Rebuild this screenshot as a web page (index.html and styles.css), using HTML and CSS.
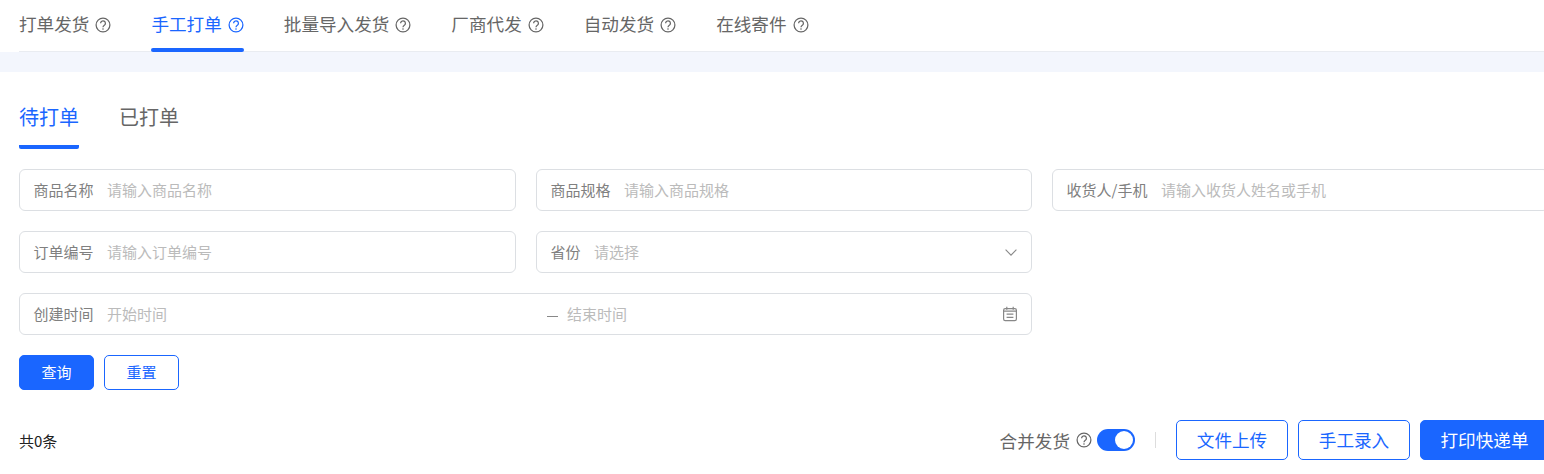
FILE: index.html
```html
<!DOCTYPE html>
<html lang="zh-CN">
<head>
<meta charset="utf-8">
<title>手工打单</title>
<link rel="stylesheet" href="styles.css">
</head>
<body>
<svg class="defs" width="0" height="0" aria-hidden="true">
  <symbol id="help" viewBox="0 0 16 16">
    <circle cx="8" cy="8" r="6.9" fill="none" stroke="currentColor" stroke-width="1.25"/>
    <path d="M5.6 6.3a2.4 2.4 0 1 1 3.7 2c-.9.6-1.3 1-1.3 2" fill="none" stroke="currentColor" stroke-width="1.25"/>
    <circle cx="8" cy="12" r=".8" fill="currentColor"/>
  </symbol>
</svg>
<header class="top-tabs">
  <nav class="top-tabs-inner">
    <a class="top-tab">打单发货<svg class="help"><use href="#help"/></svg></a>
    <a class="top-tab active">手工打单<svg class="help"><use href="#help"/></svg></a>
    <a class="top-tab">批量导入发货<svg class="help"><use href="#help"/></svg></a>
    <a class="top-tab">厂商代发<svg class="help"><use href="#help"/></svg></a>
    <a class="top-tab">自动发货<svg class="help"><use href="#help"/></svg></a>
    <a class="top-tab">在线寄件<svg class="help"><use href="#help"/></svg></a>
  </nav>
</header>
<div class="band"></div>
<main class="content">
  <div class="sub-tabs">
    <a class="sub-tab active">待打单</a>
    <a class="sub-tab">已打单</a>
  </div>
  <form class="filters">
    <div class="field"><span class="label">商品名称</span><span class="ph">请输入商品名称</span></div>
    <div class="field"><span class="label">商品规格</span><span class="ph">请输入商品规格</span></div>
    <div class="field"><span class="label">收货人/手机</span><span class="ph">请输入收货人姓名或手机</span></div>
    <div class="field"><span class="label">订单编号</span><span class="ph">请输入订单编号</span></div>
    <div class="field"><span class="label">省份</span><span class="ph grow">请选择</span>
      <svg class="chev" viewBox="0 0 12 7"><path d="M.6.7L6 6.1 11.4.7" fill="none" stroke="currentColor" stroke-width="1.1"/></svg>
    </div>
    <div class="field-empty"></div>
    <div class="field wide"><span class="label">创建时间</span>
      <span class="ph range-start">开始时间</span><span class="dash"></span><span class="ph grow">结束时间</span>
      <svg class="cal" viewBox="0 0 16 16" fill="none" stroke="currentColor" stroke-width="1.2">
        <rect x="1.6" y="2.6" width="12.8" height="12" rx="1.6"/>
        <path d="M4.8 .8v3M11.2 .8v3M1.6 5.2h12.8M4.6 8.2h6.8M4.6 11.4h6.8"/>
      </svg>
    </div>
  </form>
  <div class="actions">
    <button class="btn primary" type="button">查询</button>
    <button class="btn outline" type="button">重置</button>
  </div>
  <div class="toolbar">
    <span class="total">共0条</span>
    <div class="tools">
      <span class="merge">合并发货<svg class="help"><use href="#help"/></svg></span>
      <span class="switch"><span class="knob"></span></span>
      <span class="sep"></span>
      <button class="btn big outline" type="button">文件上传</button>
      <button class="btn big outline" type="button">手工录入</button>
      <button class="btn big primary last" type="button">打印快递单</button>
    </div>
  </div>
</main>
</body>
</html>
```

FILE: styles.css
```css
* { box-sizing: border-box; }
html, body { margin: 0; height: 474px; overflow: hidden; background: #fff; }
body { font-family: "Noto Sans CJK SC", "Liberation Sans", sans-serif; width: 1544px; color: #666; }
.defs { position: absolute; }
.top-tabs { height: 52px; padding-left: 19px; }
.top-tabs-inner { display: flex; gap: 40px; height: 52px; border-bottom: 1px solid #e9ecf1; }
.top-tab { position: relative; display: flex; align-items: flex-start; height: 51px; padding-top: 11px; font-size: 17.6px; line-height: 26px; color: #666; }
.top-tab .help { margin: 6px 0 0 6px; }
.top-tab.active { color: #1a66ff; }
.top-tab.active::after { content: ""; position: absolute; left: 0; right: 0; bottom: -1px; height: 4px; border-radius: 2px; background: #1a66ff; }
.help { width: 16px; height: 16px; flex: none; }
.band { height: 20px; background: #f3f6fd; }
.content { width: 1530px; margin-left: 19px; }
.sub-tabs { display: flex; gap: 40px; height: 77px; }
.sub-tab { height: 77px; padding-top: 29px; font-size: 20px; line-height: 32px; color: #666; }
.sub-tab.active { color: #1a66ff; border-bottom: 4px solid #1a66ff; border-radius: 2px; }
.filters { display: grid; grid-template-columns: 497px 496px 497px; gap: 20px; margin-top: 20px; }
.field { display: flex; align-items: center; height: 42px; padding: 0 14px; border: 1px solid #dcdfe3; border-radius: 6px; font-size: 15px; line-height: 38px; }
.field.wide { grid-column: span 2; }
.label { color: #808080; margin: 0 13.5px 0 -.5px; white-space: nowrap; }
.ph { color: #bbb; white-space: nowrap; }
.grow { flex: 1; }
.range-start { width: 440px; }
.dash { width: 11px; height: 1px; background: #888; margin: 4px 9px 0 0; }
.chev { width: 12px; height: 7px; color: #888; }
.cal { width: 16px; height: 16px; color: #888; margin-right: -1px; }
.actions { display: flex; gap: 10px; margin-top: 20px; }
.btn { font: inherit; font-size: 15px; line-height: 28px; width: 75px; height: 35px; padding: 0 0 2px; border-radius: 5px; border: 1px solid #1a66ff; cursor: pointer; }
.primary { background: #1a66ff; color: #fff; }
.outline { background: #fff; color: #1a66ff; }
.btn.big { width: 112px; height: 40px; font-size: 17.6px; padding: 0; }
.btn.last { width: 129px; }
.toolbar { display: flex; justify-content: space-between; align-items: center; height: 40px; margin-top: 30px; }
.total { font-size: 15px; color: #222; }
.tools { display: flex; align-items: center; gap: 10px; }
.merge { display: flex; align-items: center; gap: 6px; font-size: 17.6px; color: #666; margin-right: -5px; }
.switch { display: flex; align-items: center; justify-content: flex-end; width: 38px; height: 22px; padding-right: 2px; border-radius: 11px; background: #1a66ff; margin-right: 10px; }
.knob { width: 18px; height: 18px; border-radius: 50%; background: #fff; }
.sep { width: 1px; height: 16px; background: #ddd; margin-right: 10px; }
```
